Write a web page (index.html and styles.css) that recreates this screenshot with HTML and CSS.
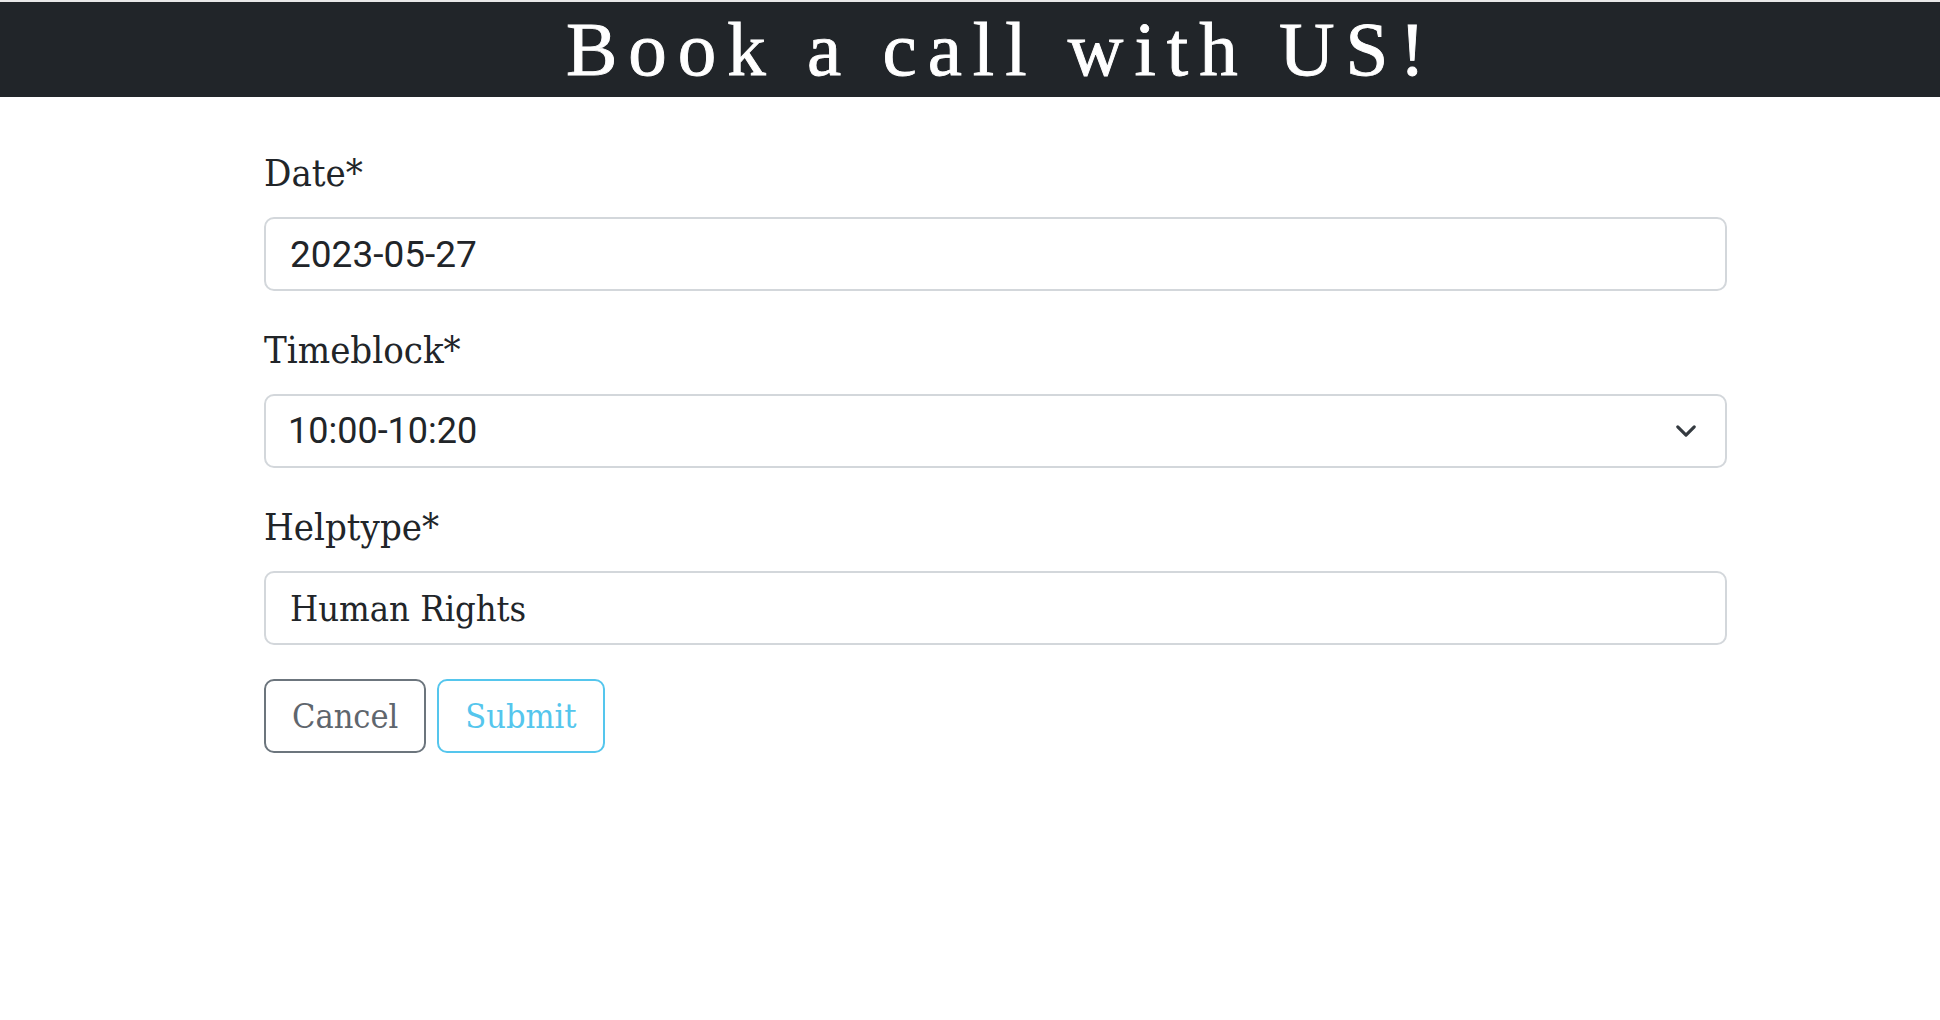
FILE: index.html
```html
<!DOCTYPE html>
<html lang="en">
<head>
<meta charset="utf-8">
<title>Book a call with US!</title>
<link rel="stylesheet" href="styles.css">
</head>
<body>
<header class="banner">
  <h1 class="banner-title">Book a call with US!</h1>
</header>
<main class="form-wrap">
  <form class="booking-form">
    <div class="field">
      <label class="field-label" for="date">Date*</label>
      <input class="field-control mono-digits" id="date" type="text" value="2023-05-27">
    </div>
    <div class="field">
      <label class="field-label" for="timeblock">Timeblock*</label>
      <div class="select-wrap">
        <select class="field-control field-select mono-digits time-digits" id="timeblock">
          <option>10:00-10:20</option>
        </select>
        <svg class="select-chevron" viewBox="0 0 16 16" width="22" height="22" aria-hidden="true">
          <path d="M2 5l6 6 6-6" fill="none" stroke="#343a40" stroke-width="2.3" stroke-linecap="round" stroke-linejoin="round"/>
        </svg>
      </div>
    </div>
    <div class="field">
      <label class="field-label" for="helptype">Helptype*</label>
      <input class="field-control" id="helptype" type="text" value="Human Rights">
    </div>
    <div class="actions">
      <button type="button" class="btn btn-cancel">Cancel</button>
      <button type="submit" class="btn btn-submit">Submit</button>
    </div>
  </form>
</main>
</body>
</html>
```

FILE: styles.css
```css
html, body {
  margin: 0;
  padding: 0;
  background: #ffffff;
}

body {
  font-family: "DejaVu Serif Condensed", "DejaVu Serif", serif;
  color: #212529;
}

.banner {
  border-top: 2px solid #e8e8e8;
  background: #212529;
  height: 95px;
  display: flex;
  justify-content: center;
  align-items: flex-start;
}

.banner-title {
  margin: 0;
  padding-left: 62px;
  font-family: "Liberation Serif", "Times New Roman", serif;
  font-weight: 400;
  font-size: 77px;
  line-height: 95px;
  letter-spacing: 11px;
  color: #ffffff;
  -webkit-text-stroke: 0.9px #ffffff;
}

.form-wrap {
  width: 1463px;
  margin-left: 264px;
  padding-top: 51px;
}

.booking-form {
  display: flex;
  flex-direction: column;
}

.field {
  display: flex;
  flex-direction: column;
  margin-bottom: 34px;
}

.field-label {
  font-size: 38px;
  line-height: 51px;
  margin-bottom: 18px;
  color: #212529;
}

.field-control {
  box-sizing: border-box;
  width: 100%;
  height: 74px;
  padding: 0 24px;
  border: 2px solid #d3d7db;
  border-radius: 10px;
  background: #ffffff;
  color: #212529;
  font-family: "DejaVu Serif Condensed", "DejaVu Serif", serif;
  font-size: 36px;
  outline: none;
}

.mono-digits {
  font-family: Roboto, "Liberation Sans", sans-serif;
  font-size: 37px;
}

.time-digits {
  font-size: 36px;
  padding-left: 22px;
}

.select-wrap {
  position: relative;
}

.field-select {
  appearance: none;
  -webkit-appearance: none;
  padding-right: 70px;
}

.select-chevron {
  position: absolute;
  right: 30px;
  top: 26px;
  pointer-events: none;
}

.actions {
  display: flex;
  gap: 11px;
  margin-top: 0;
}

.btn {
  box-sizing: border-box;
  height: 74px;
  padding: 0 26px;
  border-radius: 10px;
  background: #ffffff;
  font-family: "DejaVu Serif Condensed", "DejaVu Serif", serif;
  font-size: 34px;
  cursor: pointer;
}

.btn-cancel {
  border: 2px solid #6c757d;
  color: #5f666d;
}

.btn-submit {
  border: 2px solid #55c6ed;
  color: #55c6ed;
}
```
